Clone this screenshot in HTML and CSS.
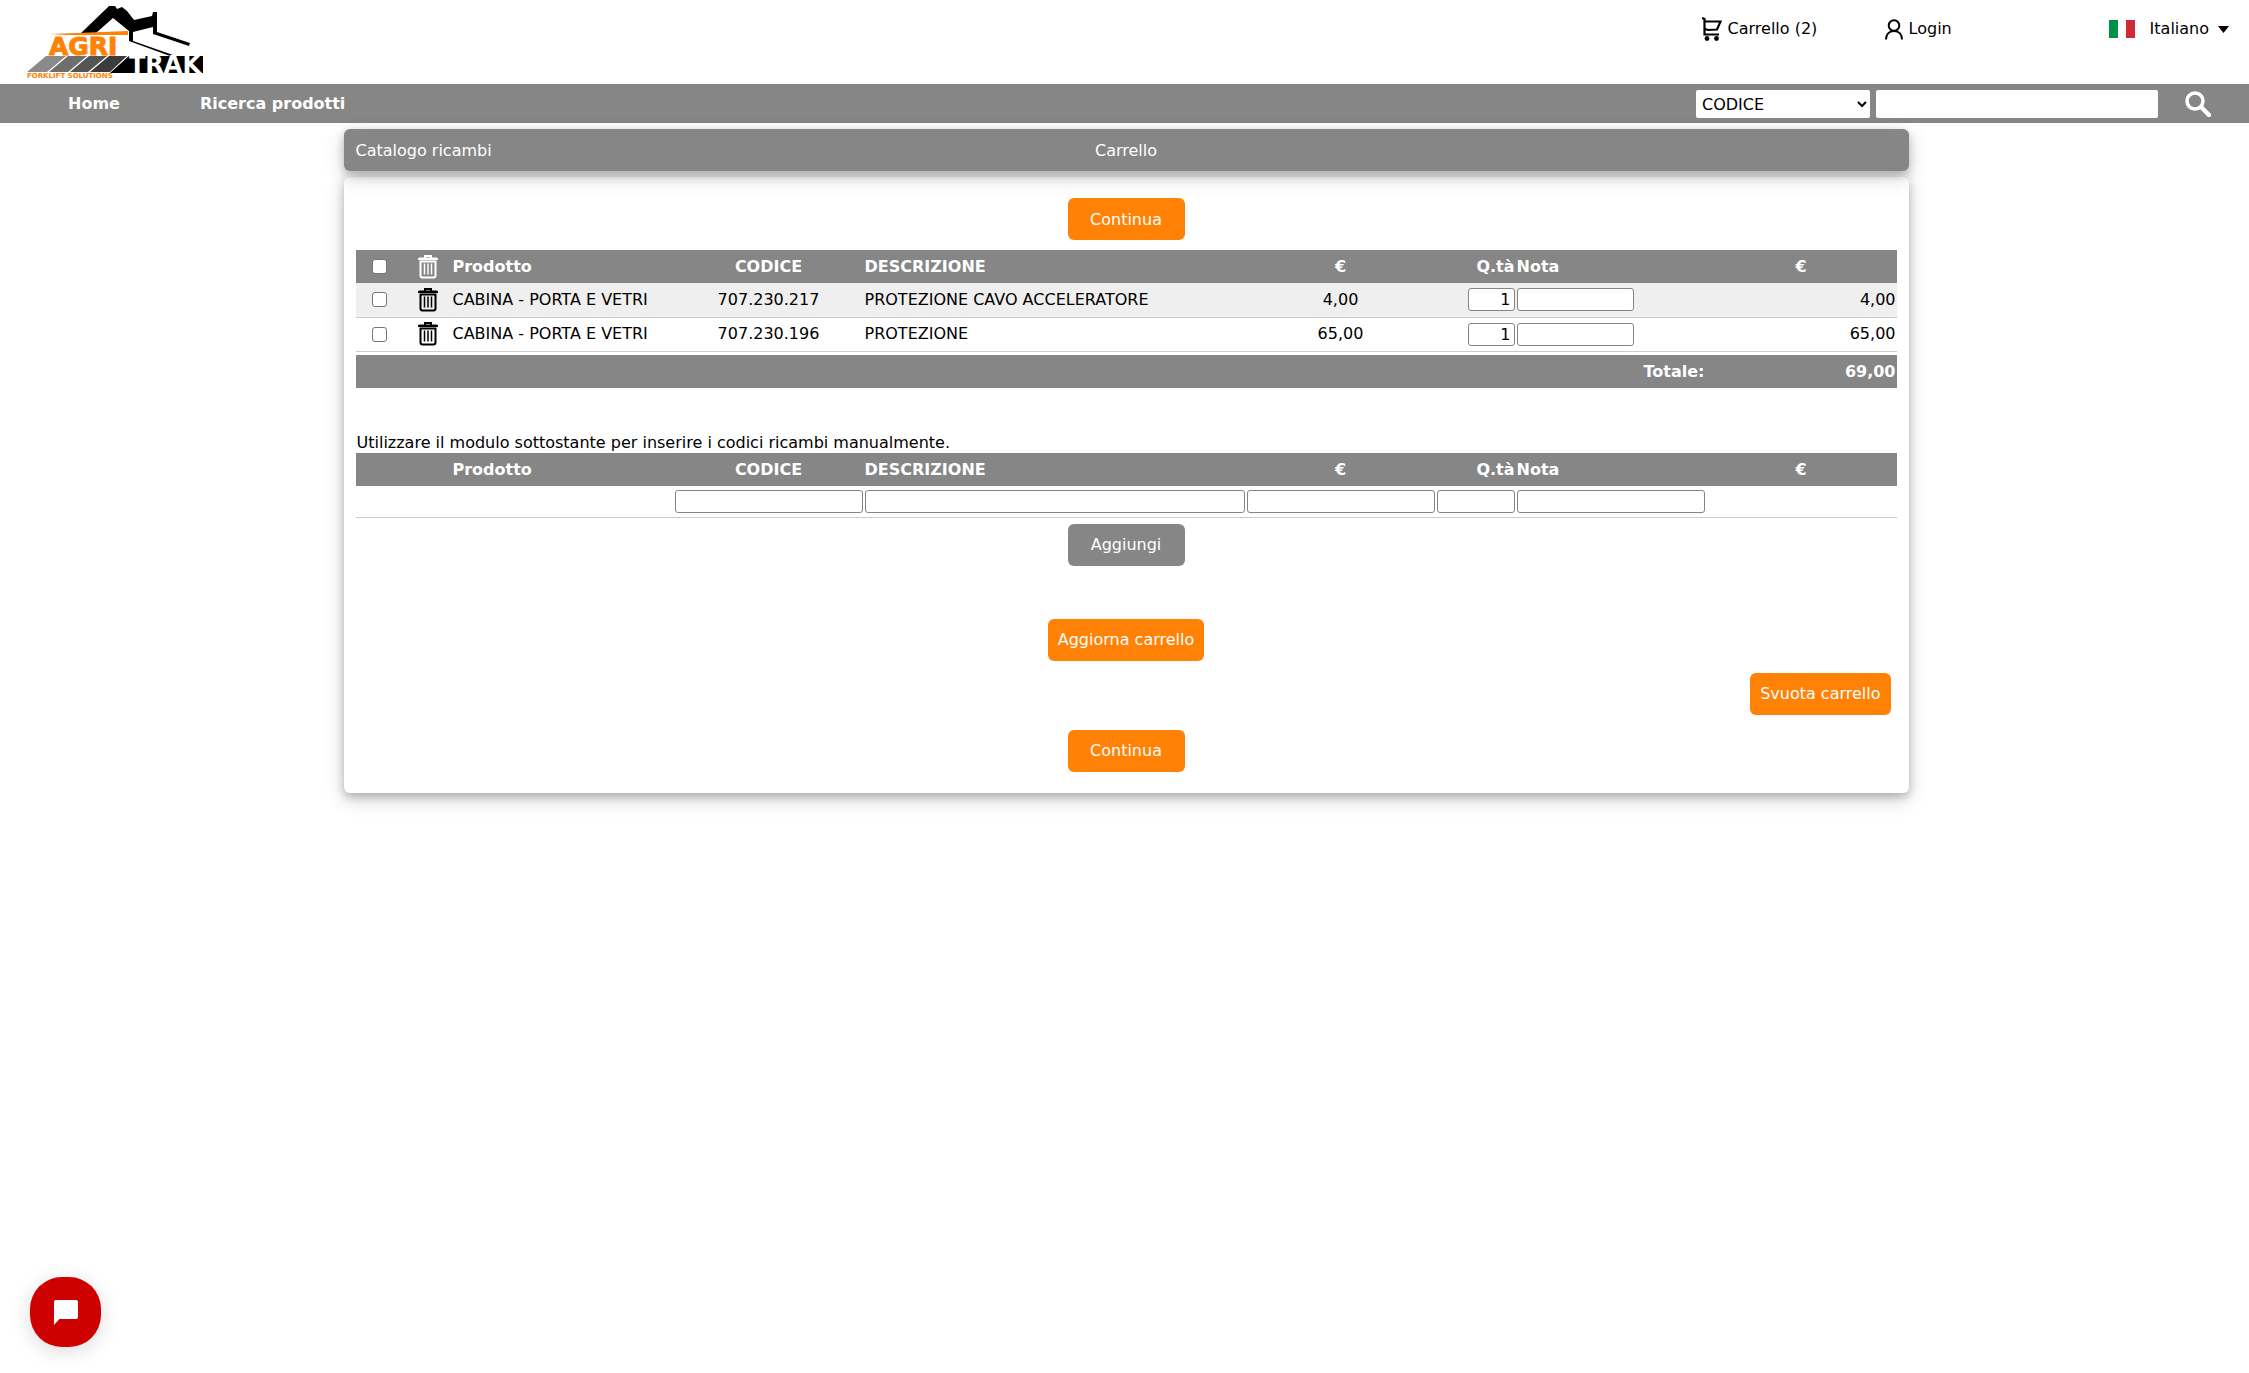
FILE: index.html
```html
<!DOCTYPE html>
<html lang="it">
<head>
<meta charset="utf-8">
<title>Carrello - Agritrak</title>
<meta name="viewport" content="width=device-width, initial-scale=1">
<link rel="stylesheet" href="styles.css">
</head>
<body>
<svg class="sprite" aria-hidden="true">
  <symbol id="trash" viewBox="0 0 20 24">
    <path d="M7 3V1h6v2" fill="none" stroke="currentColor" stroke-width="2"/>
    <path d="M0 5V3.500Q0 2.500 2 2.500h16q2 0 2 1V5z" fill="currentColor"/>
    <path d="M2.500 6.500h15v14q0 2-2 2h-11q-2 0-2-2z" fill="none" stroke="currentColor" stroke-width="2"/>
    <path d="M6.500 8.500v11M10 8.500v11M13.500 8.500v11" stroke="currentColor" stroke-width="1.500"/>
  </symbol>
</svg>

<header class="topbar">
  <a class="logo" href="#" aria-label="Agritrak Forklift Solutions">
    <svg width="180" height="80" viewBox="25 2 180 80">
      <path d="M81 33L106 9l3-3 6 0 2 3 5-2 5 4 7 9 18-4 1-4h4V32l33 11-1 3-36-12V27l-20 5v9l40 14-3 1-41-15V31L113 18 96 33z" fill="#000"/>
      <path d="M50 34L128 31v4L66 35z" fill="#ff8206"/>
      <text class="logo-agri" x="49" y="55">AGRI</text>
      <path d="M46 56h20L47 72H27z" fill="#8a8a8a"/>
      <path d="M68 56h19L68 72H49z" fill="#6e6e6e"/>
      <path d="M89 56h18L88 72H70z" fill="#555"/>
      <path d="M109 56h18L110 72H90z" fill="#3c3c3c"/>
      <path d="M129 56h74v17h-93z" fill="#000"/>
      <text class="logo-trak" x="129" y="73">TRAK</text>
      <text class="logo-sub" x="27" y="78">FORKLIFT SOLUTIONS</text>
    </svg>
  </a>
  <div class="tools">
    <a class="tool cart" href="#">
      <svg width="20" height="24" viewBox="0 0 20 24"><path d="M0 1l2.500 1v15.500H17M2.500 4.500H18.500L15 12.500l-9 .5-3-1" fill="none" stroke="#000" stroke-width="2.200"/><circle cx="5" cy="21.500" r="2.400"/><circle cx="14.500" cy="21.500" r="2.400"/></svg>
      <span>Carrello (2)</span>
    </a>
    <a class="tool login" href="#">
      <svg width="18" height="21" viewBox="0 0 18 21"><circle cx="9" cy="6.500" r="5.300" fill="none" stroke="#000" stroke-width="2"/><path d="M1 20.500c0-5 3-8.500 8-8.500s8 3.500 8 8.500" fill="none" stroke="#000" stroke-width="2"/></svg>
      <span>Login</span>
    </a>
    <button class="tool lang" type="button">
      <svg width="26" height="18" viewBox="0 0 26 18"><path d="M0 0h9v18H0z" fill="#009246"/><path d="M9 0h9v18H9z" fill="#fff"/><path d="M17 0h9v18h-9z" fill="#ce2b37"/></svg>
      <span>Italiano</span>
      <svg class="caret" width="11" height="7" viewBox="0 0 11 7"><path d="M0 0h11L5.500 7z"/></svg>
    </button>
  </div>
</header>

<nav class="nav">
  <a href="#">Home</a>
  <a href="#">Ricerca prodotti</a>
  <form class="search">
    <select aria-label="Campo di ricerca"><option>CODICE</option></select>
    <input type="text" aria-label="Testo da cercare">
    <button type="submit" aria-label="Cerca"><svg width="26" height="26" viewBox="0 0 26 26"><circle cx="10" cy="10" r="8" fill="none" stroke="#fff" stroke-width="3.500"/><path d="M16 16l8 8" stroke="#fff" stroke-width="4.500" stroke-linecap="round"/></svg></button>
  </form>
</nav>

<main class="page">
  <div class="titlebar">
    <a href="#">Catalogo ricambi</a>
    <h1>Carrello</h1>
  </div>
  <section class="card">
    <div class="row"><button class="btn" type="button">Continua</button></div>
    <table class="grid cart-items">
      <colgroup><col class="c-icon"><col class="c-icon"><col class="c-prod"><col class="c-mid"><col><col class="c-mid"><col class="c-qty"><col class="c-mid"><col class="c-last"></colgroup>
      <thead>
        <tr><th class="center"><input type="checkbox" aria-label="Seleziona tutti"></th><th class="center"><svg class="trash" width="20" height="24"><use href="#trash"/></svg></th><th>Prodotto</th><th class="center">CODICE</th><th>DESCRIZIONE</th><th class="center">€</th><th class="right">Q.tà</th><th>Nota</th><th class="center">€</th></tr>
      </thead>
      <tbody>
        <tr class="odd"><td class="center"><input type="checkbox" aria-label="Seleziona 707.230.217"></td><td class="center"><button class="del" type="button" aria-label="Elimina"><svg class="trash" width="20" height="24"><use href="#trash"/></svg></button></td><td>CABINA - PORTA E VETRI</td><td class="center">707.230.217</td><td>PROTEZIONE CAVO ACCELERATORE</td><td class="center">4,00</td><td class="right"><input class="field qty" type="text" value="1" aria-label="Quantità"></td><td><input class="field note" type="text" aria-label="Nota"></td><td class="right">4,00</td></tr>
        <tr><td class="center"><input type="checkbox" aria-label="Seleziona 707.230.196"></td><td class="center"><button class="del" type="button" aria-label="Elimina"><svg class="trash" width="20" height="24"><use href="#trash"/></svg></button></td><td>CABINA - PORTA E VETRI</td><td class="center">707.230.196</td><td>PROTEZIONE</td><td class="center">65,00</td><td class="right"><input class="field qty" type="text" value="1" aria-label="Quantità"></td><td><input class="field note" type="text" aria-label="Nota"></td><td class="right">65,00</td></tr>
      </tbody>
      <tfoot>
        <tr class="spacer"><td colspan="9"></td></tr>
        <tr class="total"><td class="right" colspan="8">Totale:</td><td class="right">69,00</td></tr>
      </tfoot>
    </table>

    <p class="hint">Utilizzare il modulo sottostante per inserire i codici ricambi manualmente.</p>
    <table class="grid manual">
      <colgroup><col class="c-icon"><col class="c-icon"><col class="c-prod"><col class="c-mid"><col><col class="c-mid"><col class="c-qty"><col class="c-mid"><col class="c-last"></colgroup>
      <thead>
        <tr><th></th><th></th><th>Prodotto</th><th class="center">CODICE</th><th>DESCRIZIONE</th><th class="center">€</th><th class="right">Q.tà</th><th>Nota</th><th class="center">€</th></tr>
      </thead>
      <tbody>
        <tr><td></td><td></td><td></td><td><input class="field" type="text" aria-label="Codice"></td><td><input class="field" type="text" aria-label="Descrizione"></td><td><input class="field" type="text" aria-label="Prezzo"></td><td><input class="field" type="text" aria-label="Quantità"></td><td><input class="field" type="text" aria-label="Nota"></td><td></td></tr>
      </tbody>
    </table>
    <div class="row add"><button class="btn gray" type="button">Aggiungi</button></div>
    <div class="row update"><button class="btn" type="button">Aggiorna carrello</button></div>
    <div class="row empty"><button class="btn" type="button">Svuota carrello</button></div>
    <div class="row"><button class="btn" type="button">Continua</button></div>
  </section>
</main>

<button class="chat" type="button" aria-label="Apri chat"><svg width="24" height="25" viewBox="0 0 24 25"><path d="M2 0h20q2 0 2 2v15q0 2-2 2H5.500L0 25V2q0-2 2-2z" fill="#fff"/></svg></button>
</body>
</html>
```
FILE: styles.css
```css
* { box-sizing: border-box; }
body {
  margin: 0;
  background: #fff;
  color: #000;
  font: 16px/20px Verdana, "DejaVu Sans", sans-serif;
}
a { color: inherit; text-decoration: none; }
button, input, select { font: inherit; color: inherit; margin: 0; }
button { border: 0; padding: 0; background: none; cursor: pointer; }
svg { display: block; }
.sprite { position: absolute; width: 0; height: 0; }

.topbar {
  display: flex;
  justify-content: space-between;
  height: 84px;
  padding: 2px 20px 0 25px;
}
.logo-agri, .logo-trak, .logo-sub { font-family: "DejaVu Sans", sans-serif; font-weight: bold; }
.logo-agri { font-size: 25px; fill: #ff8206; stroke: #ff8206; stroke-width: 1px; }
.logo-trak { font-size: 24px; fill: #fff; }
.logo-sub { font-size: 7px; fill: #ff8206; }
.tools { display: flex; align-items: flex-start; padding-top: 14px; }
.tool { display: flex; align-items: center; height: 26px; gap: 6px; }
.cart { width: 183px; }
.login { width: 224px; }
.lang { gap: 15px; }
.caret { margin-left: -6px; }

.nav {
  display: flex;
  align-items: center;
  height: 39px;
  padding: 1px 38px 0 68px;
  gap: 80px;
  background: #868686;
  color: #fff;
  font-weight: bold;
}
.search { display: flex; align-items: center; gap: 4px; margin-left: auto; }
.search select, .search input {
  height: 30px;
  border: 1px solid #868686;
  border-radius: 3px;
  background: #fff;
  color: #000;
  font-weight: normal;
}
.search select { width: 176px; padding: 0 2px; }
.search input { width: 284px; }
.search button { margin-left: 22px; }

.page { max-width: 1568px; margin: 0 auto; padding: 6px 0 60px 3px; }
.titlebar, .card {
  border-radius: 6px;
  box-shadow: 0 4px 8px rgba(0, 0, 0, .2), 0 6px 20px rgba(0, 0, 0, .19);
}
.titlebar {
  position: relative;
  display: grid;
  grid-template-columns: 1fr auto 1fr;
  align-items: center;
  height: 42px;
  padding: 1px 12px 0;
  background: #868686;
  color: #fff;
}
.titlebar h1 { margin: 0; font-size: 16px; font-weight: normal; }
.card { margin-top: 6px; padding: 21px 12px; }

.row { display: flex; justify-content: center; }
.btn {
  min-width: 117px;
  height: 42px;
  padding: 1px 10px 0;
  border-radius: 6px;
  background: #ff8206;
  color: #fff;
}
.gray { background: #868686; }

.grid { width: 100%; table-layout: fixed; border-collapse: collapse; }
.c-icon { width: 48px; }
.c-prod { width: 222px; }
.c-mid { width: 190px; }
.c-qty { width: 80px; }
.c-last { width: 191px; }
.grid th, .grid td { height: 34px; padding: 0 1px; text-align: left; white-space: nowrap; }
.grid th, .total td { height: 33px; background: #868686; color: #fff; font-weight: bold; }
.grid tbody td { border-bottom: 1px solid #ccc; }
.grid .center { text-align: center; }
.grid .right { text-align: right; }
.grid .odd td { background: #efefef; }
.grid .spacer td { height: 4px; }
.cart-items { margin-top: 10px; }
.manual tbody td { height: 31px; }
.trash, .del { display: block; margin: 0 auto; }
input[type="checkbox"] {
  display: block;
  appearance: none;
  width: 15px;
  height: 15px;
  margin: 0 auto;
  border: 1px solid #767676;
  border-radius: 3px;
  background: #fff;
}
.field {
  display: block;
  width: 100%;
  height: 23px;
  padding: 0 3px;
  border: 1px solid #858585;
  border-radius: 3px;
  background: #fff;
}
.qty { width: 47px; margin-left: auto; text-align: right; }
.note { width: 117px; }

.hint { margin: 45px 0 0; padding: 0 1px; }
.add { margin-top: 6px; }
.update { margin-top: 53px; }
.empty { justify-content: flex-end; margin: 12px 6px 15px; }

.chat {
  position: fixed;
  left: 30px;
  bottom: 26px;
  display: grid;
  place-items: center;
  width: 71px;
  height: 70px;
  border-radius: 32px;
  background: #ce0000;
  box-shadow: 0 4px 20px rgba(0, 0, 0, .15);
}
```
